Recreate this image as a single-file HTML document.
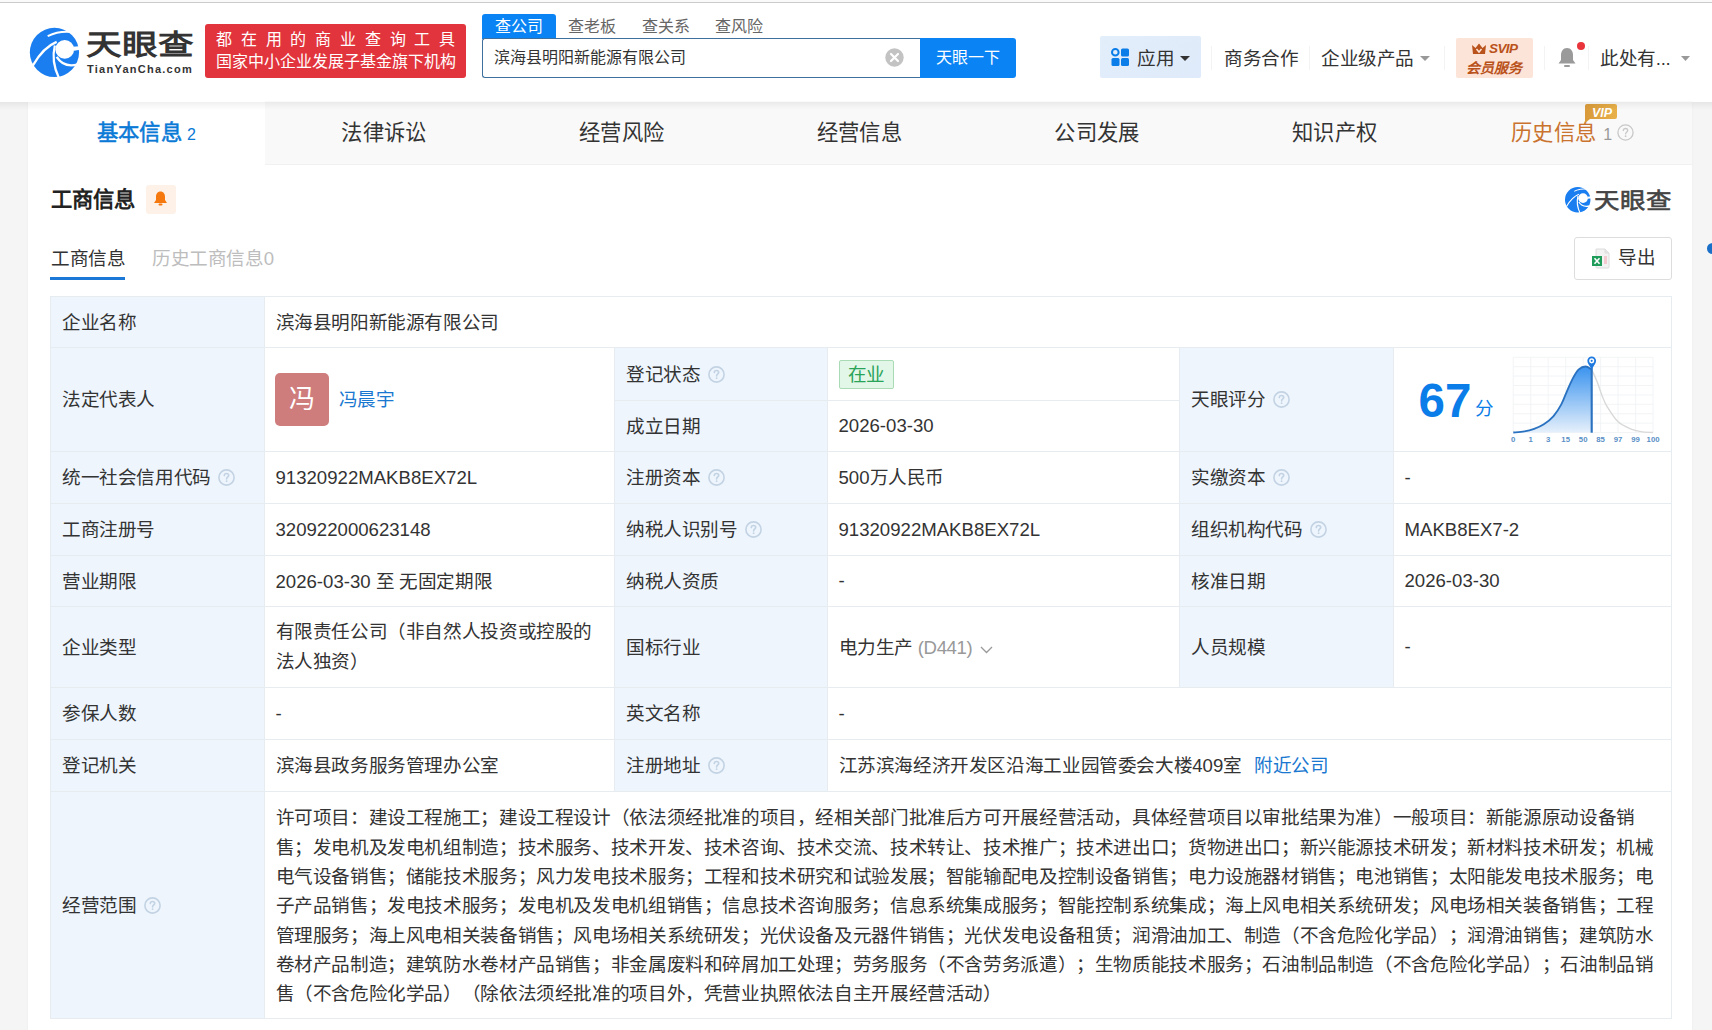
<!DOCTYPE html>
<html lang="zh-CN"><head><meta charset="utf-8">
<style>
*{margin:0;padding:0;box-sizing:border-box}
html,body{text-spacing-trim:space-all;width:1712px;height:1030px;overflow:hidden;background:#f5f5f5;font-family:"Liberation Sans",sans-serif;color:#333}
.a{position:absolute;white-space:nowrap}
#topline{left:0;top:0;width:1712px;height:3px;background:#fafafa;border-bottom:1px solid #cbcbcb}
#header{left:0;top:3px;width:1712px;height:99px;background:#fff}
#hshadow{left:0;top:102px;width:1712px;height:8px;background:linear-gradient(rgba(0,0,0,.06),rgba(0,0,0,0))}
#panel{left:28px;top:101px;width:1664px;height:929px;background:#fff;box-shadow:0 0 3px rgba(0,0,0,.04)}
.tab{top:101px;height:64px;width:237.7px;text-align:center;line-height:64px;font-size:21.3px;letter-spacing:0.3px;color:#333}
.tab.on{background:#fff;color:#0a7ad6;-webkit-text-stroke:0.55px #0a7ad6}
.tab.on sup{-webkit-text-stroke:0}
.tab sup{font-size:16px;vertical-align:baseline;font-weight:normal;margin-left:5px}
.cell{position:absolute;border-right:1px solid #e7ecf1;border-bottom:1px solid #e7ecf1;font-size:18.6px;letter-spacing:-0.38px;color:#333;padding-left:10.5px;display:flex;align-items:center;white-space:nowrap}
.lb{background:#eef5fd;padding-left:11px}
.lat{letter-spacing:0}
.avatar{display:inline-block;width:54px;height:53px;background:#cf7c7c;border-radius:5px;color:#fff;font-size:26px;line-height:53px;text-align:center;margin-right:10px;margin-left:-1px;position:relative;top:2px;vertical-align:middle}
.lnk{color:#1a78d0}
.tag{display:inline-block;background:#e3f7e8;border:1px solid #a9dcb5;color:#28a358;height:29px;line-height:27px;padding:0 8px;border-radius:2px;position:relative;top:2px}
.ml{line-height:29.3px;white-space:nowrap;position:relative;top:1.5px}
.scope{position:relative;top:3px}
.q{margin-left:7.5px;vertical-align:-2px}
.in{display:block;white-space:nowrap;position:relative;top:-2px}
.in0{display:block;white-space:nowrap}

</style></head><body>
<div class="a" id="topline"></div>
<div class="a" id="panel"></div>
<div class="a" id="header"></div>

<!-- logo -->
<svg class="a" style="left:26px;top:24px" width="58" height="58" viewBox="0 0 1030 1030">
  <circle cx="505" cy="505" r="437" fill="#1a7ef0"/>
  <circle cx="688" cy="452" r="166" fill="#fff"/>
  <path d="M835 405 L990 390 L990 455 L850 475Z" fill="#fff"/>
  <path d="M120 740 C240 530 380 385 545 318" stroke="#fff" stroke-width="40" fill="none"/>
  <path d="M512 380 C468 560 490 760 585 960" stroke="#fff" stroke-width="40" fill="none"/>
  <path d="M545 585 C625 715 760 760 920 718" stroke="#fff" stroke-width="42" fill="none"/>
  <path d="M385 215 C520 150 650 128 800 142" stroke="#fff" stroke-width="34" fill="none"/>
</svg>
<div class="a" style="left:85.5px;top:29px;font-size:35.7px;font-weight:bold;color:#333;line-height:40px;transform:scaleY(0.81);transform-origin:0 0">天眼查</div>
<div class="a" style="left:87px;top:63px;font-size:11px;font-weight:bold;color:#333;letter-spacing:1.25px">TianYanCha.com</div>

<!-- red banner -->
<div class="a" style="left:205px;top:24px;width:261px;height:54px;background:#e2343c;border-radius:3px"></div>
<div class="a" style="left:216px;top:29px;font-size:16px;color:#fff;line-height:22px;letter-spacing:8.8px">都在用的商业查询工具</div>
<div class="a" style="left:216px;top:51px;font-size:16px;color:#fff;line-height:22px;letter-spacing:0px">国家中小企业发展子基金旗下机构</div>

<!-- search -->
<div class="a" style="left:482px;top:14px;width:74px;height:25px;background:#0a84f5;border-radius:3px 3px 0 0"></div>
<div class="a" style="left:495px;top:16px;font-size:16px;color:#fff;line-height:22px">查公司</div>
<div class="a" style="left:568px;top:16px;font-size:16px;color:#666;line-height:22px">查老板</div>
<div class="a" style="left:642px;top:16px;font-size:16px;color:#666;line-height:22px">查关系</div>
<div class="a" style="left:715px;top:16px;font-size:16px;color:#666;line-height:22px">查风险</div>
<div class="a" style="left:482px;top:38px;width:440px;height:40px;border:1px solid #3f6f9c;border-right:none;border-radius:3px 0 0 3px;background:#fff"></div>
<div class="a" style="left:494px;top:47px;font-size:16px;color:#333;line-height:22px">滨海县明阳新能源有限公司</div>
<svg class="a" style="left:885px;top:48px" width="19" height="19" viewBox="0 0 19 19"><circle cx="9.5" cy="9.5" r="9.2" fill="#c3c3c3"/><path d="M6 6L13 13M13 6L6 13" stroke="#fff" stroke-width="2.2" stroke-linecap="round"/></svg>
<div class="a" style="left:920px;top:38px;width:96px;height:40px;background:#0a84f5;border-radius:0 3px 3px 0;color:#fff;font-size:16px;line-height:40px;text-align:center">天眼一下</div>

<!-- right header -->
<div class="a" style="left:1100px;top:36px;width:101px;height:42px;background:linear-gradient(135deg,#e3eefb,#dfeafa);border-radius:2px"></div>
<svg class="a" style="left:1111px;top:48px" width="19" height="19" viewBox="0 0 19 19"><circle cx="4.3" cy="4.3" r="3.3" fill="none" stroke="#0a7de8" stroke-width="2"/><rect x="10" y="0.5" width="8" height="8" rx="1.5" fill="#0a7de8"/><rect x="0.5" y="10" width="8" height="8" rx="1.5" fill="#0a7de8"/><rect x="10" y="10" width="8" height="8" rx="1.5" fill="#0a7de8"/></svg>
<div class="a" style="left:1137px;top:47px;font-size:18.6px;letter-spacing:-0.38px;color:#333;line-height:24px">应用</div>
<svg class="a" style="left:1180px;top:56px" width="10" height="5"><path d="M0 0H10L5 5Z" fill="#333"/></svg>
<div class="a" style="left:1211px;top:46px;width:1px;height:24px;background:#f3f3f3"></div>
<div class="a" style="left:1224px;top:47px;font-size:18.6px;letter-spacing:-0.38px;color:#333;line-height:24px">商务合作</div>
<div class="a" style="left:1309px;top:46px;width:1px;height:24px;background:#f3f3f3"></div>
<div class="a" style="left:1321px;top:47px;font-size:18.6px;letter-spacing:-0.38px;color:#333;line-height:24px">企业级产品</div>
<svg class="a" style="left:1420px;top:56px" width="10" height="5"><path d="M0 0H10L5 5Z" fill="#999"/></svg>
<div class="a" style="left:1444px;top:46px;width:1px;height:24px;background:#f3f3f3"></div>
<div class="a" style="left:1456px;top:38px;width:77px;height:40px;background:#fde4d8;border-radius:2px"></div>
<div class="a" style="left:1489px;top:40px;font-size:13.5px;font-weight:bold;font-style:italic;color:#b9521b;line-height:18px;letter-spacing:-0.6px">SVIP</div>
<svg class="a" style="left:1471px;top:43px" width="16" height="12" viewBox="0 0 16 12"><path d="M1 2L4.5 5L8 0.5L11.5 5L15 2L14 11H2Z" fill="#b9521b"/><path d="M5.5 6L8 9L10.5 6" stroke="#fde4d8" stroke-width="1.5" fill="none"/></svg>
<div class="a" style="left:1465.5px;top:58.5px;font-size:14px;font-weight:bold;font-style:italic;color:#b9521b;line-height:18px">会员服务</div>
<div class="a" style="left:1544px;top:46px;width:1px;height:24px;background:#f3f3f3"></div>
<svg class="a" style="left:1557px;top:47px" width="20" height="21" viewBox="0 0 20 21"><path d="M10 1C6 1 4 4.5 4 8V13L1.5 16.5H18.5L16 13V8C16 4.5 14 1 10 1Z" fill="#9a9a9a"/><rect x="7" y="18" width="6" height="2" rx="1" fill="#9a9a9a"/></svg>
<div class="a" style="left:1577px;top:42px;width:8px;height:8px;border-radius:50%;background:#e8343a"></div>
<div class="a" style="left:1588px;top:46px;width:1px;height:24px;background:#f3f3f3"></div>
<div class="a" style="left:1600px;top:47px;font-size:18.6px;letter-spacing:-0.38px;color:#333;line-height:24px">此处有...</div>
<svg class="a" style="left:1681px;top:56px" width="9" height="5"><path d="M0 0H9L4.5 5Z" fill="#999"/></svg>

<div id="edgedot" class="a" style="left:1707px;top:243px;width:11px;height:11px;border-radius:50%;background:#1a6fc8"></div>
<!-- nav tabs -->
<div class="a" style="left:28px;top:101px;width:1664px;height:64px;background:#f9f9f9;border-bottom:1px solid #f1f1f1"></div>
<div class="a tab on" style="left:28px;width:237px">基本信息<sup>2</sup></div>
<div class="a tab" style="left:265px">法律诉讼</div>
<div class="a tab" style="left:502.7px">经营风险</div>
<div class="a tab" style="left:740.4px">经营信息</div>
<div class="a tab" style="left:978.1px">公司发展</div>
<div class="a tab" style="left:1215.8px">知识产权</div>
<div class="a tab" style="left:1453.5px;width:238.5px;color:#c9732f">历史信息<sup style="color:#999;margin-left:7px">1</sup><svg style="margin-left:5px;vertical-align:-1px" width="17" height="17" viewBox="0 0 17 17"><circle cx="8.5" cy="8.5" r="7.6" fill="none" stroke="#c8c8c8" stroke-width="1.3"/><path d="M6.3 6.6C6.3 5.3 7.3 4.5 8.5 4.5C9.7 4.5 10.7 5.3 10.7 6.5C10.7 7.9 8.6 8.1 8.6 9.9" fill="none" stroke="#c8c8c8" stroke-width="1.3" stroke-linecap="round"/><circle cx="8.6" cy="12.2" r="0.9" fill="#c8c8c8"/></svg></div>
<svg class="a" style="left:1584px;top:104px" width="34" height="20" viewBox="0 0 34 20"><defs><linearGradient id="vg" x1="0" y1="0" x2="1" y2="0"><stop offset="0" stop-color="#d99a3a"/><stop offset="1" stop-color="#e8b04a"/></linearGradient></defs><path d="M3 0H31Q33 0 33 2V13Q33 15 31 15H6L1 19V2Q1 0 3 0Z" fill="url(#vg)"/><text x="18" y="12.5" text-anchor="middle" font-family="Liberation Sans" font-size="12.5" font-weight="bold" font-style="italic" fill="#fff">VIP</text></svg>
<div class="a" id="hshadow"></div>
<!-- section -->
<div class="a" style="left:51px;top:186px;font-size:21.3px;font-weight:bold;color:#222;line-height:28px">工商信息</div>
<div class="a" style="left:146px;top:185px;width:30px;height:29px;background:#fdf1e8;border-radius:3px"></div>
<svg class="a" style="left:153px;top:191px" width="15" height="15" viewBox="0 0 15 15"><path d="M7.5 0.5C4.8 0.5 3 2.8 3 5.5V9L1 12H14L12 9V5.5C12 2.8 10.2 0.5 7.5 0.5Z" fill="#f5790f"/><rect x="5.5" y="12.5" width="4" height="2" rx="1" fill="#f5790f"/></svg>
<svg class="a" style="left:1563px;top:185px" width="30" height="30" viewBox="0 0 1030 1030">
  <circle cx="505" cy="505" r="437" fill="#1a7ef0"/>
  <circle cx="688" cy="452" r="166" fill="#fff"/>
  <path d="M835 405 L990 390 L990 455 L850 475Z" fill="#fff"/>
  <path d="M120 740 C240 530 380 385 545 318" stroke="#fff" stroke-width="40" fill="none"/>
  <path d="M512 380 C468 560 490 760 585 960" stroke="#fff" stroke-width="40" fill="none"/>
  <path d="M545 585 C625 715 760 760 920 718" stroke="#fff" stroke-width="42" fill="none"/>
  <path d="M385 215 C520 150 650 128 800 142" stroke="#fff" stroke-width="34" fill="none"/>
</svg>
<div class="a" style="left:1594px;top:187px;font-size:25.5px;font-weight:normal;-webkit-text-stroke:0.7px #444;color:#444;line-height:32px;transform:scaleY(0.85);transform-origin:0 0">天眼查</div>

<div class="a" style="left:51px;top:246.5px;font-size:18.6px;letter-spacing:-0.38px;color:#333;line-height:24px">工商信息</div>
<div class="a" style="left:50px;top:277px;width:75px;height:3px;background:#1c78d6"></div>
<div class="a" style="left:152px;top:246.5px;font-size:18.6px;letter-spacing:-0.38px;color:#bdbdbd;line-height:24px">历史工商信息0</div>
<div class="a" style="left:1574px;top:237px;width:98px;height:43px;border:1px solid #ddd;border-radius:3px"></div>
<svg class="a" style="left:1591px;top:248px" width="19" height="21" viewBox="0 0 19 21"><path d="M5 1H14L18 5V19Q18 20 17 20H6Q5 20 5 19Z" fill="#f3f3f3" stroke="#dcdcdc" stroke-width="1"/><path d="M14 1V5H18" fill="#e6e6e6" stroke="#dcdcdc" stroke-width="1"/><rect x="13" y="8" width="3" height="8" fill="#f4c9cf"/><rect x="1" y="8" width="10" height="10" fill="#1f9c5a"/><path d="M3.5 10.3L8.5 15.7M8.5 10.3L3.5 15.7" stroke="#fff" stroke-width="1.6"/></svg>
<div class="a" style="left:1618px;top:246px;font-size:18.6px;letter-spacing:-0.38px;color:#333;line-height:24px">导出</div>

<!-- table -->
<div id="tbl" class="a" style="left:50px;top:296px;width:1622px;height:723px;border-left:1px solid #e7ecf1;border-top:1px solid #e7ecf1"></div>
<!-- TABLE START -->
<div class="cell lb" style="left:51px;top:297px;width:214px;height:51px;"><span class="in">企业名称</span></div>
<div class="cell" style="left:265px;top:297px;width:1407px;height:51px;"><span class="in">滨海县明阳新能源有限公司</span></div>
<div class="cell lb" style="left:51px;top:348px;width:214px;height:104px;"><span class="in">法定代表人</span></div>
<div class="cell" style="left:265px;top:348px;width:350px;height:104px;"><span class="in"><span class="avatar">冯</span><span class="lnk" style="position:relative;top:3.5px">冯晨宇</span></span></div>
<div class="cell lb" style="left:615px;top:348px;width:213px;height:53px;"><span class="in">登记状态<svg class="q" width="17" height="17" viewBox="0 0 17 17"><circle cx="8.5" cy="8.5" r="7.6" fill="none" stroke="#c3d3e3" stroke-width="1.6"/><path d="M6.3 6.6C6.3 5.3 7.3 4.5 8.5 4.5C9.7 4.5 10.7 5.3 10.7 6.5C10.7 7.9 8.6 8.1 8.6 9.9" fill="none" stroke="#c3d3e3" stroke-width="1.6" stroke-linecap="round"/><circle cx="8.6" cy="12.2" r="0.9" fill="#c3d3e3"/></svg></span></div>
<div class="cell" style="left:828px;top:348px;width:352px;height:53px;"><span class="in"><span class="tag">在业</span></span></div>
<div class="cell lb" style="left:615px;top:401px;width:213px;height:51px;"><span class="in">成立日期</span></div>
<div class="cell" style="left:828px;top:401px;width:352px;height:51px;letter-spacing:0"><span class="in0">2026-03-30</span></div>
<div class="cell lb" style="left:1180px;top:348px;width:214px;height:104px;"><span class="in">天眼评分<svg class="q" width="17" height="17" viewBox="0 0 17 17"><circle cx="8.5" cy="8.5" r="7.6" fill="none" stroke="#c3d3e3" stroke-width="1.6"/><path d="M6.3 6.6C6.3 5.3 7.3 4.5 8.5 4.5C9.7 4.5 10.7 5.3 10.7 6.5C10.7 7.9 8.6 8.1 8.6 9.9" fill="none" stroke="#c3d3e3" stroke-width="1.6" stroke-linecap="round"/><circle cx="8.6" cy="12.2" r="0.9" fill="#c3d3e3"/></svg></span></div>
<div class="cell" style="left:1394px;top:348px;width:278px;height:104px;"><span class="in"><!--SCORE--></span></div>
<div class="cell lb" style="left:51px;top:452px;width:214px;height:52px;"><span class="in">统一社会信用代码<svg class="q" width="17" height="17" viewBox="0 0 17 17"><circle cx="8.5" cy="8.5" r="7.6" fill="none" stroke="#c3d3e3" stroke-width="1.6"/><path d="M6.3 6.6C6.3 5.3 7.3 4.5 8.5 4.5C9.7 4.5 10.7 5.3 10.7 6.5C10.7 7.9 8.6 8.1 8.6 9.9" fill="none" stroke="#c3d3e3" stroke-width="1.6" stroke-linecap="round"/><circle cx="8.6" cy="12.2" r="0.9" fill="#c3d3e3"/></svg></span></div>
<div class="cell" style="left:265px;top:452px;width:350px;height:52px;letter-spacing:0"><span class="in0">91320922MAKB8EX72L</span></div>
<div class="cell lb" style="left:615px;top:452px;width:213px;height:52px;"><span class="in">注册资本<svg class="q" width="17" height="17" viewBox="0 0 17 17"><circle cx="8.5" cy="8.5" r="7.6" fill="none" stroke="#c3d3e3" stroke-width="1.6"/><path d="M6.3 6.6C6.3 5.3 7.3 4.5 8.5 4.5C9.7 4.5 10.7 5.3 10.7 6.5C10.7 7.9 8.6 8.1 8.6 9.9" fill="none" stroke="#c3d3e3" stroke-width="1.6" stroke-linecap="round"/><circle cx="8.6" cy="12.2" r="0.9" fill="#c3d3e3"/></svg></span></div>
<div class="cell" style="left:828px;top:452px;width:352px;height:52px;"><span class="in"><span class="lat">500</span>万人民币</span></div>
<div class="cell lb" style="left:1180px;top:452px;width:214px;height:52px;"><span class="in">实缴资本<svg class="q" width="17" height="17" viewBox="0 0 17 17"><circle cx="8.5" cy="8.5" r="7.6" fill="none" stroke="#c3d3e3" stroke-width="1.6"/><path d="M6.3 6.6C6.3 5.3 7.3 4.5 8.5 4.5C9.7 4.5 10.7 5.3 10.7 6.5C10.7 7.9 8.6 8.1 8.6 9.9" fill="none" stroke="#c3d3e3" stroke-width="1.6" stroke-linecap="round"/><circle cx="8.6" cy="12.2" r="0.9" fill="#c3d3e3"/></svg></span></div>
<div class="cell" style="left:1394px;top:452px;width:278px;height:52px;"><span class="in0">-</span></div>
<div class="cell lb" style="left:51px;top:504px;width:214px;height:52px;"><span class="in">工商注册号</span></div>
<div class="cell" style="left:265px;top:504px;width:350px;height:52px;letter-spacing:0"><span class="in0">320922000623148</span></div>
<div class="cell lb" style="left:615px;top:504px;width:213px;height:52px;"><span class="in">纳税人识别号<svg class="q" width="17" height="17" viewBox="0 0 17 17"><circle cx="8.5" cy="8.5" r="7.6" fill="none" stroke="#c3d3e3" stroke-width="1.6"/><path d="M6.3 6.6C6.3 5.3 7.3 4.5 8.5 4.5C9.7 4.5 10.7 5.3 10.7 6.5C10.7 7.9 8.6 8.1 8.6 9.9" fill="none" stroke="#c3d3e3" stroke-width="1.6" stroke-linecap="round"/><circle cx="8.6" cy="12.2" r="0.9" fill="#c3d3e3"/></svg></span></div>
<div class="cell" style="left:828px;top:504px;width:352px;height:52px;letter-spacing:0"><span class="in0">91320922MAKB8EX72L</span></div>
<div class="cell lb" style="left:1180px;top:504px;width:214px;height:52px;"><span class="in">组织机构代码<svg class="q" width="17" height="17" viewBox="0 0 17 17"><circle cx="8.5" cy="8.5" r="7.6" fill="none" stroke="#c3d3e3" stroke-width="1.6"/><path d="M6.3 6.6C6.3 5.3 7.3 4.5 8.5 4.5C9.7 4.5 10.7 5.3 10.7 6.5C10.7 7.9 8.6 8.1 8.6 9.9" fill="none" stroke="#c3d3e3" stroke-width="1.6" stroke-linecap="round"/><circle cx="8.6" cy="12.2" r="0.9" fill="#c3d3e3"/></svg></span></div>
<div class="cell" style="left:1394px;top:504px;width:278px;height:52px;letter-spacing:0"><span class="in0">MAKB8EX7-2</span></div>
<div class="cell lb" style="left:51px;top:556px;width:214px;height:51px;"><span class="in">营业期限</span></div>
<div class="cell" style="left:265px;top:556px;width:350px;height:51px;"><span class="in"><span class="lat">2026-03-30 </span>至 无固定期限</span></div>
<div class="cell lb" style="left:615px;top:556px;width:213px;height:51px;"><span class="in">纳税人资质</span></div>
<div class="cell" style="left:828px;top:556px;width:352px;height:51px;"><span class="in0">-</span></div>
<div class="cell lb" style="left:1180px;top:556px;width:214px;height:51px;"><span class="in">核准日期</span></div>
<div class="cell" style="left:1394px;top:556px;width:278px;height:51px;letter-spacing:0"><span class="in0">2026-03-30</span></div>
<div class="cell lb" style="left:51px;top:607px;width:214px;height:81px;"><span class="in">企业类型</span></div>
<div class="cell" style="left:265px;top:607px;width:350px;height:81px;"><span class="in"><div class="ml">有限责任公司（非自然人投资或控股的<br>法人独资）</div></span></div>
<div class="cell lb" style="left:615px;top:607px;width:213px;height:81px;"><span class="in">国标行业</span></div>
<div class="cell" style="left:828px;top:607px;width:352px;height:81px;"><span class="in">电力生产 <span style="color:#999">(D441)</span><svg style="margin-left:8px" width="13" height="8" viewBox="0 0 13 8"><path d="M1 1L6.5 6.5L12 1" stroke="#999" stroke-width="1.3" fill="none"/></svg></span></div>
<div class="cell lb" style="left:1180px;top:607px;width:214px;height:81px;"><span class="in">人员规模</span></div>
<div class="cell" style="left:1394px;top:607px;width:278px;height:81px;"><span class="in0">-</span></div>
<div class="cell lb" style="left:51px;top:688px;width:214px;height:52px;"><span class="in">参保人数</span></div>
<div class="cell" style="left:265px;top:688px;width:350px;height:52px;"><span class="in0">-</span></div>
<div class="cell lb" style="left:615px;top:688px;width:213px;height:52px;"><span class="in">英文名称</span></div>
<div class="cell" style="left:828px;top:688px;width:844px;height:52px;"><span class="in0">-</span></div>
<div class="cell lb" style="left:51px;top:740px;width:214px;height:52px;"><span class="in">登记机关</span></div>
<div class="cell" style="left:265px;top:740px;width:350px;height:52px;"><span class="in">滨海县政务服务管理办公室</span></div>
<div class="cell lb" style="left:615px;top:740px;width:213px;height:52px;"><span class="in">注册地址<svg class="q" width="17" height="17" viewBox="0 0 17 17"><circle cx="8.5" cy="8.5" r="7.6" fill="none" stroke="#c3d3e3" stroke-width="1.6"/><path d="M6.3 6.6C6.3 5.3 7.3 4.5 8.5 4.5C9.7 4.5 10.7 5.3 10.7 6.5C10.7 7.9 8.6 8.1 8.6 9.9" fill="none" stroke="#c3d3e3" stroke-width="1.6" stroke-linecap="round"/><circle cx="8.6" cy="12.2" r="0.9" fill="#c3d3e3"/></svg></span></div>
<div class="cell" style="left:828px;top:740px;width:844px;height:52px;"><span class="in">江苏滨海经济开发区沿海工业园管委会大楼<span class="lat">409</span>室<span class="lnk" style="margin-left:12px">附近公司</span></span></div>
<div class="cell lb" style="left:51px;top:792px;width:214px;height:227px;"><span class="in">经营范围<svg class="q" width="17" height="17" viewBox="0 0 17 17"><circle cx="8.5" cy="8.5" r="7.6" fill="none" stroke="#c3d3e3" stroke-width="1.6"/><path d="M6.3 6.6C6.3 5.3 7.3 4.5 8.5 4.5C9.7 4.5 10.7 5.3 10.7 6.5C10.7 7.9 8.6 8.1 8.6 9.9" fill="none" stroke="#c3d3e3" stroke-width="1.6" stroke-linecap="round"/><circle cx="8.6" cy="12.2" r="0.9" fill="#c3d3e3"/></svg></span></div>
<div class="cell" style="left:265px;top:792px;width:1407px;height:227px;"><span class="in"><div class="ml scope">许可项目：建设工程施工；建设工程设计（依法须经批准的项目，经相关部门批准后方可开展经营活动，具体经营项目以审批结果为准）一般项目：新能源原动设备销<br>售；发电机及发电机组制造；技术服务、技术开发、技术咨询、技术交流、技术转让、技术推广；技术进出口；货物进出口；新兴能源技术研发；新材料技术研发；机械<br>电气设备销售；储能技术服务；风力发电技术服务；工程和技术研究和试验发展；智能输配电及控制设备销售；电力设施器材销售；电池销售；太阳能发电技术服务；电<br>子产品销售；发电技术服务；发电机及发电机组销售；信息技术咨询服务；信息系统集成服务；智能控制系统集成；海上风电相关系统研发；风电场相关装备销售；工程<br>管理服务；海上风电相关装备销售；风电场相关系统研发；光伏设备及元器件销售；光伏发电设备租赁；润滑油加工、制造（不含危险化学品）；润滑油销售；建筑防水<br>卷材产品制造；建筑防水卷材产品销售；非金属废料和碎屑加工处理；劳务服务（不含劳务派遣）；生物质能技术服务；石油制品制造（不含危险化学品）；石油制品销<br>售（不含危险化学品）（除依法须经批准的项目外，凭营业执照依法自主开展经营活动）</div></span></div>
<!-- TABLE END -->
<div id="score67" class="a" style="left:1418.5px;top:374px;font-size:47.5px;font-weight:bold;color:#0a7de8;line-height:54px">67</div>
<div class="a" style="left:1475px;top:396.5px;font-size:18.6px;color:#0a7de8;line-height:24px">分</div>
<!-- CHART START -->
<svg class="a" style="left:1505px;top:350px" width="160" height="100" viewBox="0 0 1648 1030">
<defs><linearGradient id="gf" x1="0" y1="0" x2="0" y2="1"><stop offset="0" stop-color="#3a93ef"/><stop offset="1" stop-color="#e6f0fb"/></linearGradient></defs>
<g stroke="#f0f2f5" stroke-width="9" fill="none"><line x1="85" y1="75" x2="85" y2="850" /><line x1="265" y1="75" x2="265" y2="850" /><line x1="445" y1="75" x2="445" y2="850" /><line x1="625" y1="75" x2="625" y2="850" /><line x1="805" y1="75" x2="805" y2="850" /><line x1="985" y1="75" x2="985" y2="850" /><line x1="1165" y1="75" x2="1165" y2="850" /><line x1="1345" y1="75" x2="1345" y2="850" /><line x1="1525" y1="75" x2="1525" y2="850" /><line x1="85" y1="75.0" x2="1525" y2="75.0" /><line x1="85" y1="171.9" x2="1525" y2="171.9" /><line x1="85" y1="268.8" x2="1525" y2="268.8" /><line x1="85" y1="365.7" x2="1525" y2="365.7" /><line x1="85" y1="462.6" x2="1525" y2="462.6" /><line x1="85" y1="559.5" x2="1525" y2="559.5" /><line x1="85" y1="656.4" x2="1525" y2="656.4" /><line x1="85" y1="753.3" x2="1525" y2="753.3" /><line x1="85" y1="850.2" x2="1525" y2="850.2" /></g>
<path d="M85 850 C104 848 164 844 200 838 C236 832 267 824 300 812 C333 800 367 787 400 765 C433 743 470 714 500 680 C530 646 557 603 580 560 C603 517 620 465 640 420 C660 375 680 327 700 290 C720 253 738 220 760 200 C782 180 808 170 830 170 C852 170 882 195 893 200 L893 850 L85 850 Z" fill="url(#gf)"/>
<path d="M85 850 C104 848 164 844 200 838 C236 832 267 824 300 812 C333 800 367 787 400 765 C433 743 470 714 500 680 C530 646 557 603 580 560 C603 517 620 465 640 420 C660 375 680 327 700 290 C720 253 738 220 760 200 C782 180 808 170 830 170 C852 170 882 195 893 200" stroke="#2a72c0" stroke-width="19" fill="none"/>
<path d="M893 200 C902 222 932 285 950 330 C968 375 983 428 1000 470 C1017 512 1022 535 1050 580 C1078 625 1123 701 1165 740 C1207 779 1261 798 1300 815 C1339 832 1362 834 1400 840 C1438 846 1504 848 1525 850" stroke="#d8d8d8" stroke-width="14" fill="none"/>
<line x1="893" y1="180" x2="893" y2="852" stroke="#2a72c0" stroke-width="22"/>
<path d="M893 200 C870 160 848 140 848 112 A45 45 0 1 1 938 112 C938 140 916 160 893 200Z" fill="#1f7ae0"/>
<circle cx="893" cy="112" r="26" fill="#fff"/><circle cx="893" cy="112" r="11" fill="#1f7ae0"/>
<g font-family="Liberation Sans" font-size="80" font-weight="bold" fill="#5a8fc6"><text x="85" y="950" text-anchor="middle">0</text><text x="265" y="950" text-anchor="middle">1</text><text x="445" y="950" text-anchor="middle">3</text><text x="625" y="950" text-anchor="middle">15</text><text x="805" y="950" text-anchor="middle">50</text><text x="985" y="950" text-anchor="middle">85</text><text x="1165" y="950" text-anchor="middle">97</text><text x="1345" y="950" text-anchor="middle">99</text><text x="1525" y="950" text-anchor="middle">100</text></g>
</svg>
<!-- CHART END -->
</body></html>
